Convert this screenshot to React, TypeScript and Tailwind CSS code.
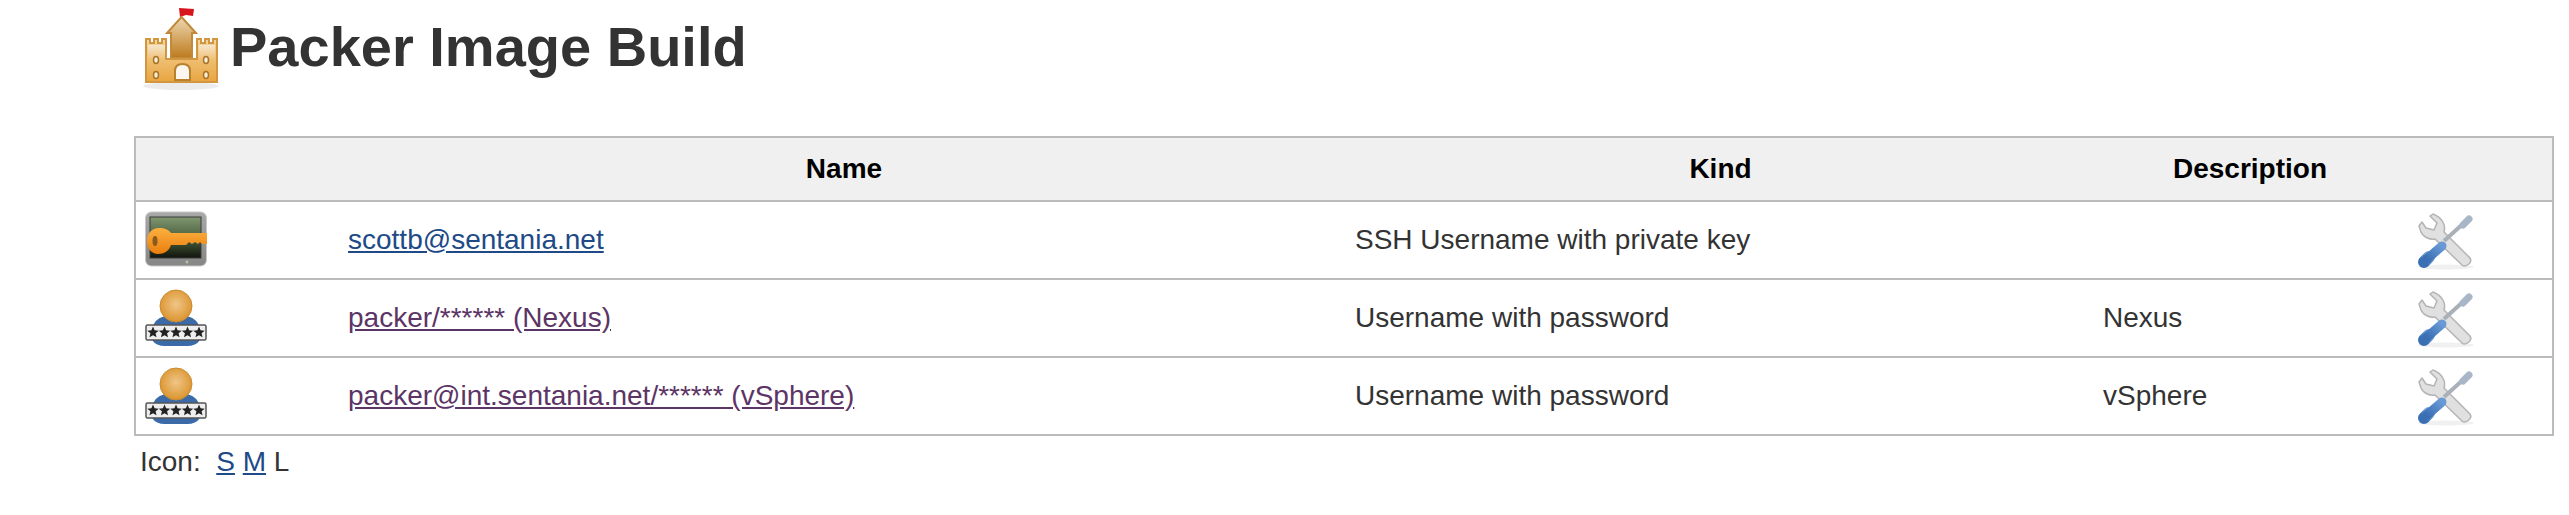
import React from "react";

const starPoints = (cx: number, cy: number, r: number) => {
  const pts: string[] = [];
  for (let i = 0; i < 10; i++) {
    const rad = i % 2 === 0 ? r : r * 0.45;
    const a = (Math.PI / 5) * i - Math.PI / 2;
    pts.push(`${(cx + rad * Math.cos(a)).toFixed(2)},${(cy + rad * Math.sin(a)).toFixed(2)}`);
  }
  return pts.join(" ");
};

const CastleIcon = () => (
  <svg viewBox="0 0 96 96" className="w-24 h-24 shrink-0 blur-[0.6px]">
    <defs>
      <linearGradient id="keep" x1="0" y1="0" x2="0" y2="1">
        <stop offset="0" stopColor="#eed8b2" />
        <stop offset="1" stopColor="#bd7a1c" />
      </linearGradient>
      <linearGradient id="tower" x1="0" y1="0" x2="0" y2="1">
        <stop offset="0" stopColor="#f5e6cc" />
        <stop offset="1" stopColor="#f0c47e" />
      </linearGradient>
      <linearGradient id="wall" x1="0" y1="0" x2="0" y2="1">
        <stop offset="0" stopColor="#f3d6a0" />
        <stop offset="1" stopColor="#e9a540" />
      </linearGradient>
    </defs>
    <ellipse cx="47" cy="86" rx="38" ry="4" fill="#ececec" />
    <path d="M45 8 L60 9 L59 16 L52 15 L46 17 Z" fill="#d8141c" />
    <path d="M47.5 17 L62 33 L58 33 L58 58 L37 58 L37 33 L33 33 Z" fill="url(#keep)" stroke="#c08a3a" strokeWidth="2" />
    <path
      d="M12 39 L16 39 L16 43 L20 43 L20 39 L24 39 L24 43 L28 43 L28 39 L32 39 L32 59 L63 59 L63 39 L67 39 L67 43 L71 43 L71 39 L75 39 L75 43 L79 43 L79 39 L83 39 L83 82 L12 82 Z"
      fill="url(#wall)"
      stroke="#d29540"
      strokeWidth="2"
    />
    <path d="M14 45 L31 45 L31 58 L14 58 Z M65 45 L81 45 L81 58 L65 58 Z" fill="url(#tower)" />
    <path d="M41 80 L41 71 Q41 64 48.5 64 Q56 64 56 71 L56 80 Z" fill="#fbf7ef" stroke="#b9802e" strokeWidth="2" />
    <ellipse cx="22" cy="60" rx="2.5" ry="3.5" fill="#f8eeda" stroke="#a87428" strokeWidth="1.5" />
    <ellipse cx="22" cy="75" rx="2.5" ry="3.5" fill="#f8eeda" stroke="#a87428" strokeWidth="1.5" />
    <ellipse cx="72" cy="60" rx="2.5" ry="3.5" fill="#f8eeda" stroke="#a87428" strokeWidth="1.5" />
    <ellipse cx="72" cy="75" rx="2.5" ry="3.5" fill="#f8eeda" stroke="#a87428" strokeWidth="1.5" />
  </svg>
);

const KeyIcon = () => (
  <svg viewBox="0 0 64 64" className="w-16 h-16 blur-[0.6px]">
    <defs>
      <linearGradient id="screen" x1="0" y1="0" x2="0" y2="1">
        <stop offset="0" stopColor="#7f9670" />
        <stop offset="0.55" stopColor="#475c3a" />
        <stop offset="1" stopColor="#10140c" />
      </linearGradient>
      <linearGradient id="keyBody" x1="0" y1="0" x2="0" y2="1">
        <stop offset="0" stopColor="#fbb040" />
        <stop offset="1" stopColor="#ea7e0e" />
      </linearGradient>
      <linearGradient id="case" x1="0" y1="0" x2="0" y2="1">
        <stop offset="0" stopColor="#a8a8a8" />
        <stop offset="1" stopColor="#868686" />
      </linearGradient>
    </defs>
    <rect x="0.5" y="4" width="61" height="54" rx="6" fill="url(#case)" stroke="#c8c8c8" />
    <rect x="5" y="9" width="51" height="41" fill="url(#screen)" stroke="#3a3a3a" />
    <circle cx="42" cy="54" r="1.5" fill="#b2c0a4" />
    <path
      d="M2 33 C2 24 8 20 14 20 C20 20 24 22 26 25 L62 25 L62 36 L57 36 L55 34 L53 36 L50 34 L47 36 L44 34 L41 37 L26 37 C24 43 19 46 13 46 C7 46 2 41 2 33 Z"
      fill="url(#keyBody)"
    />
    <ellipse cx="10" cy="33" rx="2.5" ry="5" fill="#8a5a1e" />
  </svg>
);

const PasswordIcon = () => (
  <svg viewBox="0 0 64 64" className="w-16 h-16 blur-[0.5px]">
    <defs>
      <radialGradient id="head" cx="0.5" cy="0.45" r="0.6">
        <stop offset="0" stopColor="#f0c688" />
        <stop offset="1" stopColor="#d98f26" />
      </radialGradient>
    </defs>
    <path d="M7 44 Q8 33 20 30 L42 30 Q54 33 55 44 L55 54 Q51 60 42 60 L20 60 Q11 60 7 54 Z" fill="#3a6ba8" />
    <circle cx="31" cy="20" r="16" fill="url(#head)" stroke="#c98a30" />
    <rect x="1" y="39" width="60" height="15" rx="1.5" fill="#eeeeee" stroke="#555" strokeWidth="1.5" />
    {[8, 19.5, 31, 42.5, 54].map((cx) => (
      <polygon key={cx} points={starPoints(cx, 46.5, 6)} fill="#222" />
    ))}
  </svg>
);

const ToolsIcon = () => (
  <svg viewBox="0 0 64 64" className="w-16 h-16 blur-[0.6px]">
    <defs>
      <linearGradient id="handle" x1="0" y1="1" x2="1" y2="0">
        <stop offset="0" stopColor="#3a6fb4" />
        <stop offset="1" stopColor="#6a9ad6" />
      </linearGradient>
    </defs>
    <ellipse cx="33" cy="59" rx="28" ry="2.5" fill="#f0f0f0" />
    <path
      d="M6 18 L8 24 C10 29 17 32 22 31 L49 57 C52 60 60 55 57 50 L31 24 C33 18 30 10 20 6 L17 8 L24 15 L21 22 L13 20 L9 14 Z"
      fill="#e0e0e0"
      stroke="#b4b4b4"
      strokeWidth="1.5"
      strokeLinejoin="round"
    />
    <path d="M31 33 L52 14" stroke="#aab0b8" strokeWidth="4" />
    <path d="M50 17 L56 11" stroke="#a8b6c8" strokeWidth="7" strokeLinecap="round" />
    <path d="M11 54 L16 49" stroke="url(#handle)" strokeWidth="12" strokeLinecap="round" />
    <path d="M14 51 L29 38" stroke="url(#handle)" strokeWidth="9" strokeLinecap="round" />
  </svg>
);

const rows = [
  { icon: <KeyIcon />, name: "scottb@sentania.net", visited: false, kind: "SSH Username with private key", desc: "" },
  { icon: <PasswordIcon />, name: "packer/****** (Nexus)", visited: true, kind: "Username with password", desc: "Nexus" },
  { icon: <PasswordIcon />, name: "packer@int.sentania.net/****** (vSphere)", visited: true, kind: "Username with password", desc: "vSphere" },
];

const App = () => {
  return (
    <div className="min-h-[515px] bg-white pl-[134px] pr-[15px] text-[28px] leading-8 text-[#333] font-[family-name:'Liberation_Sans',Arial,sans-serif]">
      <div className="flex items-center mb-10">
        <CastleIcon />
        <h1 className="text-[56px] leading-[64px] pb-0.5 font-bold text-[#333]">Packer Image Build</h1>
      </div>

      <table className="w-full table-fixed border-separate border-spacing-0 border-2 border-[#bbb]">
        <colgroup>
          <col className="w-[205px]" />
          <col className="w-[1006px]" />
          <col className="w-[747px]" />
          <col className="w-[312px]" />
          <col />
        </colgroup>
        <thead>
          <tr className="h-[62px] bg-[#f0f0f0] text-black">
            <th />
            <th className="font-bold text-center">Name</th>
            <th className="font-bold text-center">Kind</th>
            <th className="font-bold text-center">Description</th>
            <th />
          </tr>
        </thead>
        <tbody>
          {rows.map((row) => (
            <tr key={row.name} className="h-[78px]">
              <td className="border-t-2 border-[#bbb] pl-[9px]">{row.icon}</td>
              <td className="border-t-2 border-[#bbb] pl-[7px] pr-2">
                <a href="#" className={row.visited ? "underline text-[#5c3566]" : "underline text-[#204a87]"}>
                  {row.name}
                </a>
              </td>
              <td className="border-t-2 border-[#bbb] px-2">{row.kind}</td>
              <td className="border-t-2 border-[#bbb] pl-[9px] pr-2">{row.desc}</td>
              <td className="border-t-2 border-[#bbb] pl-[7px]">
                <ToolsIcon />
              </td>
            </tr>
          ))}
        </tbody>
      </table>

      <div className="mt-[10px] pl-[6px]">
        Icon:{"\u00a0 "}
        <a href="#" className="underline text-[#204a87]">S</a>{" "}
        <a href="#" className="underline text-[#204a87]">M</a>{" "}
        L
      </div>
    </div>
  );
};

export default App;
